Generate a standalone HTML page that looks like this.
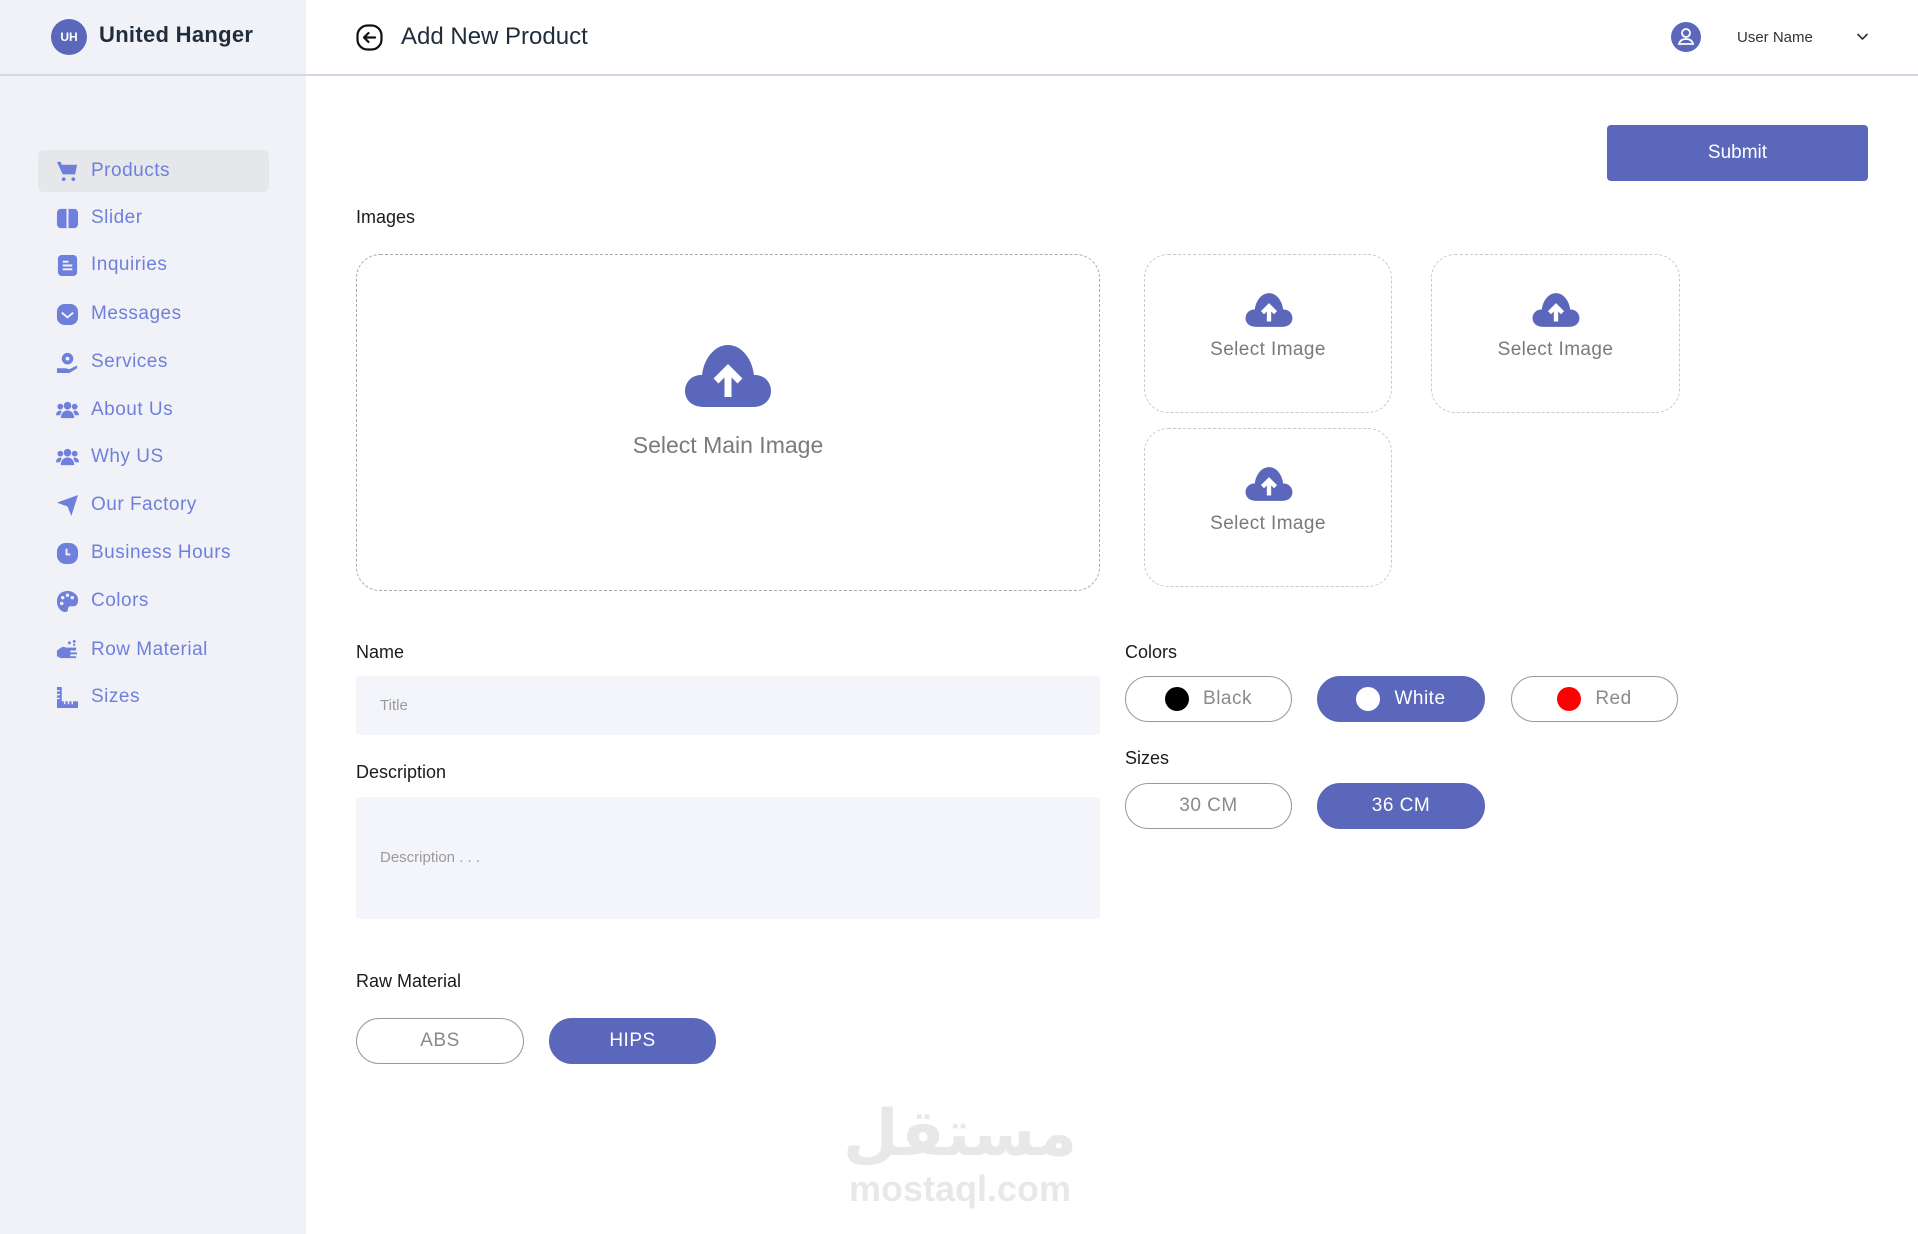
<!DOCTYPE html>
<html><head><meta charset="utf-8"><style>
*{box-sizing:border-box;margin:0;padding:0}
body{width:1918px;height:1234px;position:relative;background:#fff;font-family:"Liberation Sans",sans-serif;overflow:hidden}
.abs{position:absolute}
#side{left:0;top:0;width:306px;height:1234px;background:#f1f2f7}
#hline{left:0;top:74px;width:1918px;height:2px;background:#d6d6e4}
.nav{position:absolute;left:38px;width:231px;height:42px;border-radius:6px;display:flex;align-items:center;padding-left:18px;color:#6f7fdc;font-size:19px;letter-spacing:.5px}
.nav svg{width:23px;height:23px;margin-right:12px;fill:#6f7fdc}
.lbl{position:absolute;font-size:18px;color:#1b1b1b}
.box{position:absolute;border:1.5px dashed #c9c9d6;border-radius:24px;text-align:center;color:#7a7a7a}
.pill{position:absolute;height:46px;border:1.5px solid #9a9a9a;border-radius:23px;display:flex;align-items:center;justify-content:center;font-size:19px;color:#8a8a8a;letter-spacing:.5px}
.pill.on{background:#5b67bb;border-color:#5b67bb;color:#fff}
.dot{width:24px;height:24px;border-radius:50%;margin-right:14px}
.inp{position:absolute;background:#f4f5fa;border-radius:3px;color:#9a9a9a;font-size:15px;padding-left:24px}
</style></head><body>
<div id="side" class="abs"></div>
<div id="hline" class="abs"></div>
<div class="abs" style="left:51px;top:19px;width:36px;height:36px;border-radius:50%;background:#5b67bb;color:#fff;font-size:12px;font-weight:bold;display:flex;align-items:center;justify-content:center">UH</div>
<div class="abs" style="left:99px;top:22px;font-size:22px;font-weight:bold;color:#1f2d3d;letter-spacing:.3px">United Hanger</div>
<svg class="abs" style="left:356px;top:24px" width="27" height="27" viewBox="0 0 27 27"><rect x="1.5" y="1.5" width="24" height="24" rx="10" fill="none" stroke="#111" stroke-width="2.2"/><path d="M19 13.5H8M12.5 9L8 13.5 12.5 18" fill="none" stroke="#111" stroke-width="2.2" stroke-linecap="round" stroke-linejoin="round"/></svg>
<div class="abs" style="left:401px;top:23px;font-size:24px;color:#1f2d3d">Add New Product</div>
<svg class="abs" style="left:1671px;top:22px" width="30" height="30" viewBox="0 0 30 30"><circle cx="15" cy="15" r="15" fill="#5b67bb"/><circle cx="15" cy="11" r="4" fill="none" stroke="#fff" stroke-width="1.8"/><path d="M8 22c1-4 4-5 7-5s6 1 7 5z" fill="none" stroke="#fff" stroke-width="1.8"/></svg>
<div class="abs" style="left:1737px;top:29px;font-size:15px;color:#333">User Name</div>
<svg class="abs" style="left:1856px;top:32px" width="13" height="9" viewBox="0 0 13 9"><path d="M1.5 2l5 5 5-5" fill="none" stroke="#333" stroke-width="1.6"/></svg>

<div class="nav" style="top:150px;background:#e6e7eb"><svg viewBox="0 0 24 24"><path d="M1 2h4l1 3h16l-2 10H7zM8 18a2 2 0 1 0 .1 0zM18 18a2 2 0 1 0 .1 0z"/></svg>Products</div>
<div class="nav" style="top:197px"><svg viewBox="0 0 24 24"><rect x="1" y="2" width="22" height="20" rx="4"/><rect x="11" y="2" width="2" height="20" fill="#f1f2f7"/></svg>Slider</div>
<div class="nav" style="top:244px"><svg viewBox="0 0 24 24"><rect x="2" y="1" width="20" height="22" rx="4"/><path d="M7 8h6M7 12h10M7 16h10" stroke="#f1f2f7" stroke-width="2"/></svg>Inquiries</div>
<div class="nav" style="top:293px"><svg viewBox="0 0 24 24"><rect x="1" y="1" width="22" height="22" rx="8"/><path d="M6 10l6 5 6-5" stroke="#f1f2f7" stroke-width="2" fill="none"/></svg>Messages</div>
<div class="nav" style="top:341px"><svg viewBox="0 0 24 24"><circle cx="12" cy="8" r="6"/><circle cx="12" cy="8" r="2" fill="#f1f2f7"/><path d="M1 18h9l4 1 8-4v3l-8 5H1z"/></svg>Services</div>
<div class="nav" style="top:389px"><svg viewBox="0 0 24 24"><circle cx="12" cy="7" r="4"/><circle cx="4.5" cy="8" r="3"/><circle cx="19.5" cy="8" r="3"/><path d="M5 20c0-5 3-8 7-8s7 3 7 8zM0 17c0-3 2-5 5-5l1 1-2 4zM24 17c0-3-2-5-5-5l-1 1 2 4z"/></svg>About Us</div>
<div class="nav" style="top:436px"><svg viewBox="0 0 24 24"><circle cx="12" cy="7" r="4"/><circle cx="4.5" cy="8" r="3"/><circle cx="19.5" cy="8" r="3"/><path d="M5 20c0-5 3-8 7-8s7 3 7 8zM0 17c0-3 2-5 5-5l1 1-2 4zM24 17c0-3-2-5-5-5l-1 1 2 4z"/></svg>Why US</div>
<div class="nav" style="top:484px"><svg viewBox="0 0 24 24"><path d="M1 9L23 1 16 23 12 13z"/></svg>Our Factory</div>
<div class="nav" style="top:532px"><svg viewBox="0 0 24 24"><rect x="1" y="1" width="22" height="22" rx="9"/><path d="M11 7v6h4" stroke="#f1f2f7" stroke-width="2" fill="none"/></svg>Business Hours</div>
<div class="nav" style="top:580px"><svg viewBox="0 0 24 24"><path d="M12 1C5 1 1 6 1 12s4 11 9 11c3 0 2-3 3-5s6 0 8-2 2-4 2-6C23 5 18 1 12 1z"/><circle cx="7" cy="8" r="1.8" fill="#f1f2f7"/><circle cx="12" cy="5.5" r="1.8" fill="#f1f2f7"/><circle cx="17" cy="8" r="1.8" fill="#f1f2f7"/><circle cx="6" cy="14" r="1.8" fill="#f1f2f7"/></svg>Colors</div>
<div class="nav" style="top:629px"><svg viewBox="0 0 24 24"><path d="M1 12l6-4 4 1h10v3h-6v2h7v2h-7v2h6v2H5l-4-2z"/><circle cx="14" cy="4" r="1.5"/><circle cx="19" cy="2.5" r="1.5"/><circle cx="19" cy="6" r="1.2"/></svg>Row Material</div>
<div class="nav" style="top:676px"><svg viewBox="0 0 24 24"><path d="M1 1h5v15h17v7H1z"/><path d="M9 16v3M13 16v3M17 16v3M1 5h3M1 9h3M1 13h3" stroke="#f1f2f7" stroke-width="1.5"/></svg>Sizes</div>

<div class="abs" style="left:1607px;top:125px;width:261px;height:56px;background:#5b67bb;border-radius:4px;color:#fff;font-size:19px;display:flex;align-items:center;justify-content:center">Submit</div>

<div class="lbl" style="left:356px;top:207px">Images</div>
<div class="box" style="left:356px;top:254px;width:744px;height:337px;border-color:#a8a8b4">
<svg style="position:absolute;left:327px;top:88px" width="88" height="66" viewBox="0 0 88 66"><path d="M20 64C8 64 1 57 1 48s7-16 16-16h1C20 15 31 2 44 2s24 13 26 30h1c9 0 16 7 16 16s-7 16-18 16z" fill="#5b67bb"/><path d="M44 54V26M32 38l12-12 12 12" stroke="#fff" stroke-width="7" fill="none"/></svg>
<div style="position:absolute;left:0;right:0;top:177px;font-size:23px">Select Main Image</div></div>

<div class="box" style="left:1144px;top:254px;width:248px;height:159px"><svg style="position:absolute;left:99px;top:37px" width="50" height="36" viewBox="0 0 88 66"><path d="M20 64C8 64 1 57 1 48s7-16 16-16h1C20 15 31 2 44 2s24 13 26 30h1c9 0 16 7 16 16s-7 16-18 16z" fill="#5b67bb"/><path d="M44 54V26M32 38l12-12 12 12" stroke="#fff" stroke-width="8" fill="none"/></svg><div style="position:absolute;left:0;right:0;top:84px;font-size:19px;letter-spacing:.4px">Select Image</div></div>
<div class="box" style="left:1431px;top:254px;width:249px;height:159px"><svg style="position:absolute;left:99px;top:37px" width="50" height="36" viewBox="0 0 88 66"><path d="M20 64C8 64 1 57 1 48s7-16 16-16h1C20 15 31 2 44 2s24 13 26 30h1c9 0 16 7 16 16s-7 16-18 16z" fill="#5b67bb"/><path d="M44 54V26M32 38l12-12 12 12" stroke="#fff" stroke-width="8" fill="none"/></svg><div style="position:absolute;left:0;right:0;top:84px;font-size:19px;letter-spacing:.4px">Select Image</div></div>
<div class="box" style="left:1144px;top:428px;width:248px;height:159px"><svg style="position:absolute;left:99px;top:37px" width="50" height="36" viewBox="0 0 88 66"><path d="M20 64C8 64 1 57 1 48s7-16 16-16h1C20 15 31 2 44 2s24 13 26 30h1c9 0 16 7 16 16s-7 16-18 16z" fill="#5b67bb"/><path d="M44 54V26M32 38l12-12 12 12" stroke="#fff" stroke-width="8" fill="none"/></svg><div style="position:absolute;left:0;right:0;top:84px;font-size:19px;letter-spacing:.4px">Select Image</div></div>

<div class="lbl" style="left:356px;top:642px">Name</div>
<div class="inp" style="left:356px;top:676px;width:744px;height:59px;line-height:59px">Title</div>
<div class="lbl" style="left:356px;top:762px">Description</div>
<div class="inp" style="left:356px;top:797px;width:744px;height:122px;line-height:122px">Description . . .</div>
<div class="lbl" style="left:356px;top:971px">Raw Material</div>
<div class="pill" style="left:356px;top:1018px;width:168px">ABS</div>
<div class="pill on" style="left:549px;top:1018px;width:167px">HIPS</div>

<div class="lbl" style="left:1125px;top:642px">Colors</div>
<div class="pill" style="left:1125px;top:676px;width:167px"><span class="dot" style="background:#000"></span>Black</div>
<div class="pill on" style="left:1317px;top:676px;width:168px"><span class="dot" style="background:#fff"></span>White</div>
<div class="pill" style="left:1511px;top:676px;width:167px"><span class="dot" style="background:#f00"></span>Red</div>
<div class="lbl" style="left:1125px;top:748px">Sizes</div>
<div class="pill" style="left:1125px;top:783px;width:167px">30 CM</div>
<div class="pill on" style="left:1317px;top:783px;width:168px">36 CM</div>

<div class="abs" style="left:840px;top:1088px;width:240px;text-align:center;font-family:'Noto Sans CJK SC','DejaVu Sans',sans-serif;font-size:64px;font-weight:bold;color:#e8e8ea;line-height:80px">مستقل</div>
<div class="abs" style="left:840px;top:1168px;width:240px;text-align:center;font-size:36px;font-weight:bold;color:#e8e8ea">mostaql.com</div>
</body></html>
